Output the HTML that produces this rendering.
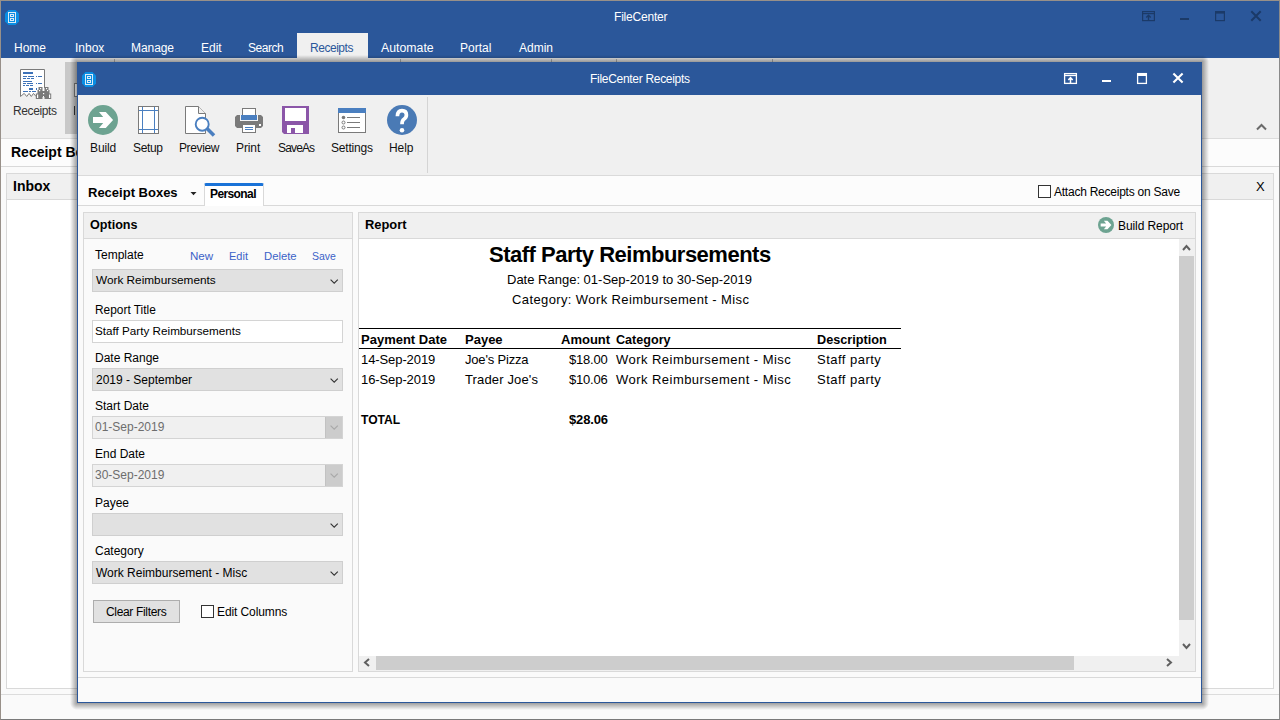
<!DOCTYPE html>
<html><head><meta charset="utf-8">
<style>
*{box-sizing:border-box;margin:0;padding:0}
html,body{width:1280px;height:720px;overflow:hidden;background:#fafafa;font-family:"Liberation Sans",sans-serif}
.a{position:absolute}
.t{position:absolute;font-size:12px;line-height:1;white-space:pre;color:#111}
.b{font-weight:bold}
.w{color:#fff}
</style></head><body>
<!-- ============ OUTER WINDOW ============ -->
<div class="a" style="left:0;top:0;width:1280px;height:720px;background:#fafafa;border:1px solid #989089;border-bottom-color:#7a7a7a;border-right-color:#8a8a8a"></div>
<!-- title + menu bar -->
<div class="a" style="left:1px;top:1px;width:1278px;height:57px;background:#2b579a"></div>
<!-- app icon -->
<svg class="a" style="left:5px;top:10px" width="14" height="15" viewBox="0 0 14 15"><path d="M3.5 0H10.5L14 3.5V11.5L10.5 15H3.5L0 11.5V3.5Z" fill="#0a8ee3"/><rect x="3.5" y="2.5" width="7" height="10" fill="none" stroke="#dcebf7" stroke-width="1"/><rect x="5.5" y="4.5" width="3" height="2" fill="none" stroke="#dcebf7"/><rect x="5.5" y="8.5" width="3" height="2" fill="none" stroke="#dcebf7"/></svg>
<div class="t w" style="left:614px;top:11px;letter-spacing:-0.2px">FileCenter</div>
<!-- outer controls (inactive, dark) -->
<svg class="a" style="left:1140px;top:10px" width="124" height="13" viewBox="0 0 124 13">
  <g fill="none" stroke="#1b3a68" stroke-width="1.2">
    <rect x="2.6" y="1.6" width="11.8" height="9"/><path d="M2.6 3.6H14.4"/><path d="M8.5 10.5V5M6.3 7.6L8.5 5.3L10.7 7.6" stroke-width="1.4"/>
    <rect x="75.6" y="1.6" width="8.8" height="9"/>
  </g>
  <rect x="75" y="1" width="10" height="2.6" fill="#1b3a68"/>
  <path d="M111.3 1.3L120.7 10.7M120.7 1.3L111.3 10.7" stroke="#1b3a68" stroke-width="2"/>
  <rect x="40" y="8" width="9" height="2" fill="#1b3a68"/>
</svg>
<!-- menu tabs -->
<div class="t w" style="left:14px;top:42px">Home</div>
<div class="t w" style="left:75px;top:42px">Inbox</div>
<div class="t w" style="left:131px;top:42px;letter-spacing:-0.07px">Manage</div>
<div class="t w" style="left:201px;top:42px">Edit</div>
<div class="t w" style="left:248px;top:42px;letter-spacing:-0.45px">Search</div>
<div class="a" style="left:297px;top:33px;width:71px;height:25px;background:#f0f0f0"></div>
<div class="t" style="left:310px;top:42px;color:#2b579a;letter-spacing:-0.47px">Receipts</div>
<div class="t w" style="left:381px;top:42px;font-size:12.3px">Automate</div>
<div class="t w" style="left:460px;top:42px">Portal</div>
<div class="t w" style="left:519px;top:42px">Admin</div>
<!-- ribbon -->
<div class="a" style="left:1px;top:58px;width:1278px;height:81px;background:#f0f0f0;border-bottom:1px solid #dcdcdc"></div>
<div class="a" style="left:65px;top:62px;width:14px;height:72px;background:#c8c8c8"></div>
<div class="t" style="left:13px;top:105px;letter-spacing:-0.4px;color:#333">Receipts</div>
<svg class="a" style="left:20px;top:69px" width="32" height="31" viewBox="0 0 32 31">
<path d="M0.5 0.5H24.5V27.5L15 27.5L13.5 24.5L11.3 27.5L9.1 24.5L6.7 27.5L4.2 24.5L1 27.5H0.5Z" fill="#fff"/>
<path d="M24.5 19V0.5H0.5V27.5L4.2 24.4L6.7 27.5L9.1 24.4L11.3 27.5L13.5 24.4L16 27.5" fill="none" stroke="#7a7a7a"/>
<rect x="3" y="3" width="10" height="2" fill="#3d72b8"/>
<path d="M3 7.5H7M8 7.5H14M16 7.5H17M18 7.5H22M3 9.5H6M7 9.5H10M11 9.5H14M3 12.5H12M3 14.5H6M7 14.5H13M16 14.5H17M18 14.5H22M3 16.5H5M6 16.5H9M10 16.5H13M3 22.5H8M9 22.5H11M12 22.5H16" stroke="#3d72b8" stroke-width="1"/>
<rect x="9" y="19" width="4" height="2" fill="#3d72b8"/><rect x="16" y="19" width="1" height="2" fill="#3d72b8"/>
<path d="M18.5 18H22.5V30H15.8V24.5H17.5V21H18.5Z M24.5 18H28.5V21H29.5V24.5H31.2V30H24.5Z M22 22H25V28H22Z" fill="#7a7a7a"/>
<g fill="#fff"><rect x="20" y="19" width="1.2" height="1.2"/><rect x="19" y="21" width="1.2" height="1.2"/><rect x="26" y="19" width="1.2" height="1.2"/><rect x="27" y="21" width="1.2" height="1.2"/><rect x="23" y="24" width="1.2" height="1.2"/><rect x="23" y="27" width="1" height="1"/><rect x="17" y="25.5" width="1.2" height="3.5"/><rect x="29" y="25.5" width="1.2" height="3.5"/></g>
</svg>
<div class="a" style="left:74px;top:83px;width:4px;height:14px;background:#fff;border:1px solid #7a7a7a;border-right:none"></div>
<div class="a" style="left:74px;top:106px;width:1px;height:9px;background:#333"></div>
<svg class="a" style="left:1256px;top:123px" width="11" height="8" viewBox="0 0 11 8"><path d="M1 6.5L5.5 2L10 6.5" fill="none" stroke="#6a6a6a" stroke-width="2"/></svg>
<!-- receipt boxes band -->
<div class="a" style="left:1px;top:139px;width:1278px;height:28px;background:#fcfcfc;border-bottom:1px solid #d9d9d9"></div>
<div class="t b" style="left:11px;top:145px;font-size:14px;color:#000">Receipt Boxes</div>
<!-- inbox panel -->
<div class="a" style="left:6px;top:173px;width:1268px;height:516px;background:#fff;border:1px solid #d9d9d9"></div>
<div class="a" style="left:7px;top:174px;width:1266px;height:26px;background:#f0f0f0;border-bottom:1px solid #d9d9d9"></div>
<div class="t b" style="left:13px;top:179px;font-size:14px;color:#000">Inbox</div>
<div class="t" style="left:1256px;top:180px;font-size:13px;color:#000">X</div>
<div class="a" style="left:1px;top:694px;width:1278px;height:1px;background:#dcdcdc"></div>

<!-- ============ DIALOG ============ -->
<div class="a" style="left:114px;top:59px;width:1px;height:3px;background:rgba(0,0,0,0.25)"></div><div class="a" style="left:400px;top:59px;width:1px;height:3px;background:rgba(0,0,0,0.25)"></div><div class="a" style="left:551px;top:59px;width:1px;height:3px;background:rgba(0,0,0,0.25)"></div><div class="a" style="left:616px;top:59px;width:1px;height:3px;background:rgba(0,0,0,0.25)"></div><div class="a" style="left:772px;top:59px;width:1px;height:3px;background:rgba(0,0,0,0.25)"></div>
<div class="a" style="left:70px;top:62px;width:7px;height:641px;background:linear-gradient(to left,rgba(0,0,0,0.37),rgba(0,0,0,0))"></div>
<div class="a" style="left:1202px;top:62px;width:7px;height:641px;background:linear-gradient(to right,rgba(0,0,0,0.37),rgba(0,0,0,0))"></div>
<div class="a" style="left:77px;top:55px;width:1125px;height:7px;background:linear-gradient(to top,rgba(0,0,0,0.37),rgba(0,0,0,0))"></div>
<div class="a" style="left:77px;top:703px;width:1125px;height:7px;background:linear-gradient(to bottom,rgba(0,0,0,0.37),rgba(0,0,0,0))"></div>
<div class="a" style="left:70px;top:55px;width:7px;height:7px;background:radial-gradient(circle at 100% 100%,rgba(0,0,0,0.37),rgba(0,0,0,0) 7px)"></div>
<div class="a" style="left:1202px;top:55px;width:7px;height:7px;background:radial-gradient(circle at 0 100%,rgba(0,0,0,0.37),rgba(0,0,0,0) 7px)"></div>
<div class="a" style="left:70px;top:703px;width:7px;height:7px;background:radial-gradient(circle at 100% 0,rgba(0,0,0,0.37),rgba(0,0,0,0) 7px)"></div>
<div class="a" style="left:1202px;top:703px;width:7px;height:7px;background:radial-gradient(circle at 0 0,rgba(0,0,0,0.37),rgba(0,0,0,0) 7px)"></div>
<div id="dlg" class="a" style="left:77px;top:62px;width:1125px;height:641px;background:#fafafa;border:1px solid #2b579a"></div>

<!-- dialog title bar -->
<div class="a" style="left:78px;top:63px;width:1123px;height:32px;background:#2b579a"></div>
<svg class="a" style="left:82px;top:72px" width="14" height="15" viewBox="0 0 14 15"><path d="M3.5 0H10.5L14 3.5V11.5L10.5 15H3.5L0 11.5V3.5Z" fill="#0a8ee3"/><rect x="3.5" y="2.5" width="7" height="10" fill="none" stroke="#dcebf7" stroke-width="1"/><rect x="5.5" y="4.5" width="3" height="2" fill="none" stroke="#dcebf7"/><rect x="5.5" y="8.5" width="3" height="2" fill="none" stroke="#dcebf7"/></svg>
<div class="t w" style="left:590px;top:73px;letter-spacing:-0.3px">FileCenter Receipts</div>
<svg class="a" style="left:1062px;top:72px" width="124" height="13" viewBox="0 0 124 13">
  <g fill="none" stroke="#fff" stroke-width="1.3">
    <rect x="2.6" y="1.6" width="11.8" height="9.8"/><path d="M2.6 3.5H14.4"/><path d="M8.5 11V5.4M6.3 8L8.5 5.7L10.7 8" stroke-width="1.5"/>
    <rect x="75.6" y="1.6" width="8.8" height="9.8"/>
  </g>
  <rect x="75" y="1" width="10" height="3" fill="#fff"/>
  <path d="M111.4 1.4L120.6 10.6M120.6 1.4L111.4 10.6" stroke="#fff" stroke-width="2.1"/>
  <rect x="40" y="8" width="9" height="2" fill="#fff"/>
</svg>
<!-- toolbar -->
<div class="a" style="left:78px;top:95px;width:1123px;height:81px;background:#f0f0f0;border-bottom:1px solid #dadada"></div>
<div class="a" style="left:427px;top:97px;width:1px;height:76px;background:#d4d4d4"></div>
<!-- Build -->
<svg class="a" style="left:88px;top:105px" width="30" height="30" viewBox="0 0 30 30"><circle cx="15" cy="15" r="15" fill="#6da391"/><path d="M5 12H15.2L11 7H17.8L25.1 15L17.8 23H11L15.2 18H5Z" fill="#fff"/></svg>
<div class="t" style="left:90px;top:142px;letter-spacing:-0.1px">Build</div>
<!-- Setup -->
<svg class="a" style="left:138px;top:106px" width="21" height="28" viewBox="0 0 21 28"><rect x="0.5" y="0.5" width="20" height="27" fill="#fff" stroke="#7a7a7a"/><path d="M4.5 1V27M16.5 1V27M1 4.5H20M1 23.5H20" stroke="#4a7fc0" stroke-width="1"/></svg>
<div class="t" style="left:133px;top:142px;letter-spacing:-0.35px">Setup</div>
<!-- Preview -->
<svg class="a" style="left:184px;top:105px" width="33" height="33" viewBox="0 0 33 33"><path d="M1.5 1.5H14.5L21.5 8.5V28.5H1.5Z" fill="#fff" stroke="#7a7a7a"/><path d="M14.5 1.5V8.5H21.5" fill="#f0f0f0" stroke="#7a7a7a"/><path d="M22 22.5L30 30.5" stroke="#4a7fc0" stroke-width="3.6"/><circle cx="18.2" cy="19.2" r="6.5" fill="#fff" stroke="#4a7fc0" stroke-width="1.9"/></svg>
<div class="t" style="left:179px;top:142px;letter-spacing:-0.38px">Preview</div>
<!-- Print -->
<svg class="a" style="left:234px;top:107px" width="30" height="27" viewBox="0 0 30 27"><rect x="8.5" y="1.5" width="13" height="9" fill="#fff" stroke="#7a7a7a"/><path d="M3 8H27L29 10V19L27 21H3L1 19V10Z" fill="#7a7a7a"/><rect x="6" y="8" width="18" height="6" fill="#f4f4f4"/><rect x="7" y="8" width="16" height="5" fill="#4a7fc0"/><rect x="25" y="17" width="2" height="2" fill="#fff"/><rect x="8.5" y="17.5" width="13" height="8" fill="#fff" stroke="#7a7a7a"/><path d="M11 20.5H19M11 22.5H19" stroke="#4a7fc0"/></svg>
<div class="t" style="left:236px;top:142px;letter-spacing:-0.1px">Print</div>
<!-- SaveAs -->
<svg class="a" style="left:282px;top:106px" width="27" height="28" viewBox="0 0 27 28"><path d="M0 0H27V28H2L0 26Z" fill="#8b56a8"/><rect x="3" y="2" width="21" height="13" fill="#fff"/><rect x="5" y="19" width="16" height="8" fill="#fff"/><rect x="9" y="22" width="4" height="5" fill="#8b56a8"/></svg>
<div class="t" style="left:278px;top:142px;letter-spacing:-0.85px">SaveAs</div>
<!-- Settings -->
<svg class="a" style="left:338px;top:108px" width="28" height="25" viewBox="0 0 28 25"><rect x="0.5" y="0.5" width="27" height="24" fill="#fff" stroke="#7a7a7a"/><rect x="0" y="0" width="28" height="5" fill="#4a7fc0"/><circle cx="5.5" cy="9.5" r="1.8" fill="#7a7a7a"/><circle cx="5.5" cy="14.5" r="1.5" fill="none" stroke="#7a7a7a"/><circle cx="5.5" cy="19.5" r="1.5" fill="none" stroke="#7a7a7a"/><path d="M9 9.5H22M9 14.5H22M9 19.5H22" stroke="#7a7a7a"/></svg>
<div class="t" style="left:331px;top:142px;letter-spacing:-0.2px">Settings</div>
<!-- Help -->
<svg class="a" style="left:387px;top:105px" width="30" height="30" viewBox="0 0 30 30"><circle cx="15" cy="15" r="15" fill="#4a7ab5"/><path d="M10.4 11.3Q10.4 5.6 15 5.6Q19.4 5.6 19.4 10Q19.4 12.6 16.9 14.2Q15 15.4 15 19.2" fill="none" stroke="#fff" stroke-width="3.7"/><circle cx="15" cy="25.2" r="2.3" fill="#fff"/></svg>
<div class="t" style="left:389px;top:142px;letter-spacing:-0.1px">Help</div>

<!-- tab strip -->
<div class="a" style="left:78px;top:176px;width:1123px;height:30px;background:#fcfcfc;border-bottom:1px solid #d9d9d9"></div>
<div class="t b" style="left:88px;top:186px;font-size:13px;color:#000">Receipt Boxes</div>
<svg class="a" style="left:190px;top:192px" width="7" height="4" viewBox="0 0 7 4"><path d="M0.5 0H6.5L3.5 3.2Z" fill="#222"/></svg>
<div class="a" style="left:204px;top:183px;width:60px;height:23px;background:#fff;border:1px solid #d9d9d9;border-top:3px solid #1a73d8;border-bottom:none;border-radius:2px 2px 0 0"></div>
<div class="t b" style="left:210px;top:188px;font-size:12px;letter-spacing:-0.6px;color:#000">Personal</div>
<div class="a" style="left:1038px;top:185px;width:13px;height:13px;background:#fff;border:1px solid #333"></div>
<div class="t" style="left:1054px;top:186px;letter-spacing:-0.24px;color:#000">Attach Receipts on Save</div>

<!-- options panel -->
<div class="a" style="left:83px;top:212px;width:270px;height:460px;background:#fafafa;border:1px solid #d9d9d9"></div>
<div class="a" style="left:84px;top:213px;width:268px;height:26px;background:#f0f0f0;border-bottom:1px solid #d9d9d9"></div>
<div class="t b" style="left:90px;top:219px;font-size:12.6px;color:#000">Options</div>


<!-- options form -->
<div class="t" style="left:95px;top:249px;color:#000">Template</div>
<div class="t" style="left:190px;top:250px;color:#3a62c8;font-size:11.6px">New</div>
<div class="t" style="left:229px;top:251px;color:#3a62c8;font-size:11px">Edit</div>
<div class="t" style="left:264px;top:251px;color:#3a62c8;font-size:11.3px">Delete</div>
<div class="t" style="left:312px;top:251px;color:#3a62c8;font-size:10.5px">Save</div>
<div class="a" style="left:92px;top:269px;width:251px;height:23px;background:#e1e1e1;border:1px solid #cfcfcf"></div>
<div class="t" style="left:96px;top:275px;color:#000;font-size:11.8px">Work Reimbursements</div>
<svg class="a" style="left:330px;top:279px" width="9" height="5" viewBox="0 0 9 5"><path d="M0.6 0.6L4.2 4.2L7.8 0.6" fill="none" stroke="#333" stroke-width="1.1"/></svg>
<div class="t" style="left:95px;top:305px;color:#000;font-size:11.9px">Report Title</div>
<div class="a" style="left:92px;top:320px;width:251px;height:23px;background:#fff;border:1px solid #d4d4d4"></div>
<div class="t" style="left:95px;top:325px;color:#000;font-size:11.7px">Staff Party Reimbursements</div>
<div class="t" style="left:95px;top:352px;color:#000">Date Range</div>
<div class="a" style="left:92px;top:368px;width:251px;height:23px;background:#e1e1e1;border:1px solid #cfcfcf"></div>
<div class="t" style="left:96px;top:374px;color:#000">2019 - September</div>
<svg class="a" style="left:330px;top:378px" width="9" height="5" viewBox="0 0 9 5"><path d="M0.6 0.6L4.2 4.2L7.8 0.6" fill="none" stroke="#333" stroke-width="1.1"/></svg>
<div class="t" style="left:95px;top:400px;color:#000">Start Date</div>
<div class="a" style="left:92px;top:416px;width:251px;height:23px;background:#f0f0f0;border:1px solid #d4d4d4"></div>
<div class="a" style="left:325px;top:417px;width:17px;height:21px;background:#cccccc;border-left:1px solid #c2c2c2"></div>
<div class="t" style="left:95px;top:421px;color:#6d6d6d">01-Sep-2019</div>
<svg class="a" style="left:330px;top:425px" width="9" height="5" viewBox="0 0 9 5"><path d="M0.6 0.6L4.2 4.2L7.8 0.6" fill="none" stroke="#a8a8a8" stroke-width="1.1"/></svg>
<div class="t" style="left:95px;top:448px;color:#000">End Date</div>
<div class="a" style="left:92px;top:464px;width:251px;height:23px;background:#f0f0f0;border:1px solid #d4d4d4"></div>
<div class="a" style="left:325px;top:465px;width:17px;height:21px;background:#cccccc;border-left:1px solid #c2c2c2"></div>
<div class="t" style="left:95px;top:469px;color:#6d6d6d">30-Sep-2019</div>
<svg class="a" style="left:330px;top:473px" width="9" height="5" viewBox="0 0 9 5"><path d="M0.6 0.6L4.2 4.2L7.8 0.6" fill="none" stroke="#a8a8a8" stroke-width="1.1"/></svg>
<div class="t" style="left:95px;top:497px;color:#000">Payee</div>
<div class="a" style="left:92px;top:513px;width:251px;height:23px;background:#e1e1e1;border:1px solid #cfcfcf"></div>
<svg class="a" style="left:330px;top:523px" width="9" height="5" viewBox="0 0 9 5"><path d="M0.6 0.6L4.2 4.2L7.8 0.6" fill="none" stroke="#333" stroke-width="1.1"/></svg>
<div class="t" style="left:95px;top:545px;color:#000">Category</div>
<div class="a" style="left:92px;top:561px;width:251px;height:23px;background:#e1e1e1;border:1px solid #cfcfcf"></div>
<div class="t" style="left:96px;top:567px;color:#000">Work Reimbursement - Misc</div>
<svg class="a" style="left:330px;top:571px" width="9" height="5" viewBox="0 0 9 5"><path d="M0.6 0.6L4.2 4.2L7.8 0.6" fill="none" stroke="#333" stroke-width="1.1"/></svg>
<div class="a" style="left:93px;top:600px;width:87px;height:23px;background:#e1e1e1;border:1px solid #adadad"></div>
<div class="t" style="left:106px;top:606px;color:#000;letter-spacing:-0.33px">Clear Filters</div>
<div class="a" style="left:201px;top:605px;width:13px;height:13px;background:#fff;border:1px solid #333"></div>
<div class="t" style="left:217px;top:606px;color:#000;letter-spacing:-0.1px">Edit Columns</div>

<!-- report panel -->
<div class="a" style="left:358px;top:212px;width:838px;height:460px;background:#fafafa;border:1px solid #d9d9d9"></div>
<div class="a" style="left:359px;top:213px;width:836px;height:26px;background:#f0f0f0;border-bottom:1px solid #d9d9d9"></div>
<div class="t b" style="left:365px;top:219px;font-size:12.9px;color:#000">Report</div>
<svg class="a" style="left:1098px;top:217px" width="16" height="16" viewBox="0 0 30 30"><circle cx="15" cy="15" r="15" fill="#6da391"/><path d="M5 12H15.2L11 7H17.8L25.1 15L17.8 23H11L15.2 18H5Z" fill="#fff"/></svg>
<div class="t" style="left:1118px;top:220px;letter-spacing:-0.09px;color:#000">Build Report</div>


<!-- report content -->
<div class="a" style="left:359px;top:239px;width:820px;height:417px;background:#fff"></div>
<div class="t b" style="left:489px;top:244px;font-size:22px;letter-spacing:-0.5px;color:#000">Staff Party Reimbursements</div>
<div class="t" style="left:507px;top:273px;font-size:13px;color:#000">Date Range: 01-Sep-2019 to 30-Sep-2019</div>
<div class="t" style="left:512px;top:293px;font-size:13px;color:#000;letter-spacing:0.39px">Category: Work Reimbursement - Misc</div>
<div class="a" style="left:359px;top:328px;width:542px;height:1px;background:#000"></div>
<div class="a" style="left:359px;top:348px;width:542px;height:1px;background:#000"></div>
<div class="t b" style="left:361px;top:333px;font-size:13px;color:#000">Payment Date</div>
<div class="t b" style="left:465px;top:333px;font-size:13px;color:#000">Payee</div>
<div class="t b" style="left:561px;top:333px;font-size:13px;color:#000">Amount</div>
<div class="t b" style="left:616px;top:334px;font-size:12.6px;color:#000">Category</div>
<div class="t b" style="left:817px;top:334px;font-size:12.7px;color:#000">Description</div>
<div class="t" style="left:361px;top:353px;font-size:13px;color:#000;letter-spacing:-0.09px">14-Sep-2019</div>
<div class="t" style="left:465px;top:353px;font-size:13px;color:#000;letter-spacing:-0.18px">Joe's Pizza</div>
<div class="t" style="left:569px;top:353px;font-size:13px;color:#000;letter-spacing:-0.19px">$18.00</div>
<div class="t" style="left:616px;top:353px;font-size:13px;color:#000;letter-spacing:0.46px">Work Reimbursement - Misc</div>
<div class="t" style="left:817px;top:353px;font-size:13px;color:#000;letter-spacing:0.48px">Staff party</div>
<div class="t" style="left:361px;top:373px;font-size:13px;color:#000;letter-spacing:-0.09px">16-Sep-2019</div>
<div class="t" style="left:465px;top:373px;font-size:13px;color:#000;letter-spacing:0.14px">Trader Joe's</div>
<div class="t" style="left:569px;top:373px;font-size:13px;color:#000;letter-spacing:-0.19px">$10.06</div>
<div class="t" style="left:616px;top:373px;font-size:13px;color:#000;letter-spacing:0.46px">Work Reimbursement - Misc</div>
<div class="t" style="left:817px;top:373px;font-size:13px;color:#000;letter-spacing:0.48px">Staff party</div>
<div class="t b" style="left:361px;top:414px;font-size:12.1px;color:#000">TOTAL</div>
<div class="t b" style="left:569px;top:413px;font-size:13px;color:#000;letter-spacing:-0.15px">$28.06</div>
<!-- scrollbars -->
<div class="a" style="left:1179px;top:239px;width:16px;height:417px;background:#f0f0f0"></div>
<div class="a" style="left:1179px;top:256px;width:15px;height:364px;background:#cdcdcd"></div>
<svg class="a" style="left:1182px;top:244px" width="9" height="7" viewBox="0 0 9 7"><path d="M1 6L4.5 2L8 6" fill="none" stroke="#606060" stroke-width="2"/></svg>
<svg class="a" style="left:1182px;top:643px" width="9" height="7" viewBox="0 0 9 7"><path d="M1 1L4.5 5L8 1" fill="none" stroke="#606060" stroke-width="2"/></svg>
<div class="a" style="left:359px;top:656px;width:836px;height:15px;background:#f0f0f0"></div>
<div class="a" style="left:376px;top:656px;width:698px;height:14px;background:#cdcdcd"></div>
<svg class="a" style="left:363px;top:658px" width="7" height="9" viewBox="0 0 7 9"><path d="M6 1L2 4.5L6 8" fill="none" stroke="#606060" stroke-width="2"/></svg>
<svg class="a" style="left:1166px;top:658px" width="7" height="9" viewBox="0 0 7 9"><path d="M1 1L5 4.5L1 8" fill="none" stroke="#606060" stroke-width="2"/></svg>

<!-- footer line -->
<div class="a" style="left:78px;top:677px;width:1123px;height:1px;background:#d9d9d9"></div>
</body></html>
